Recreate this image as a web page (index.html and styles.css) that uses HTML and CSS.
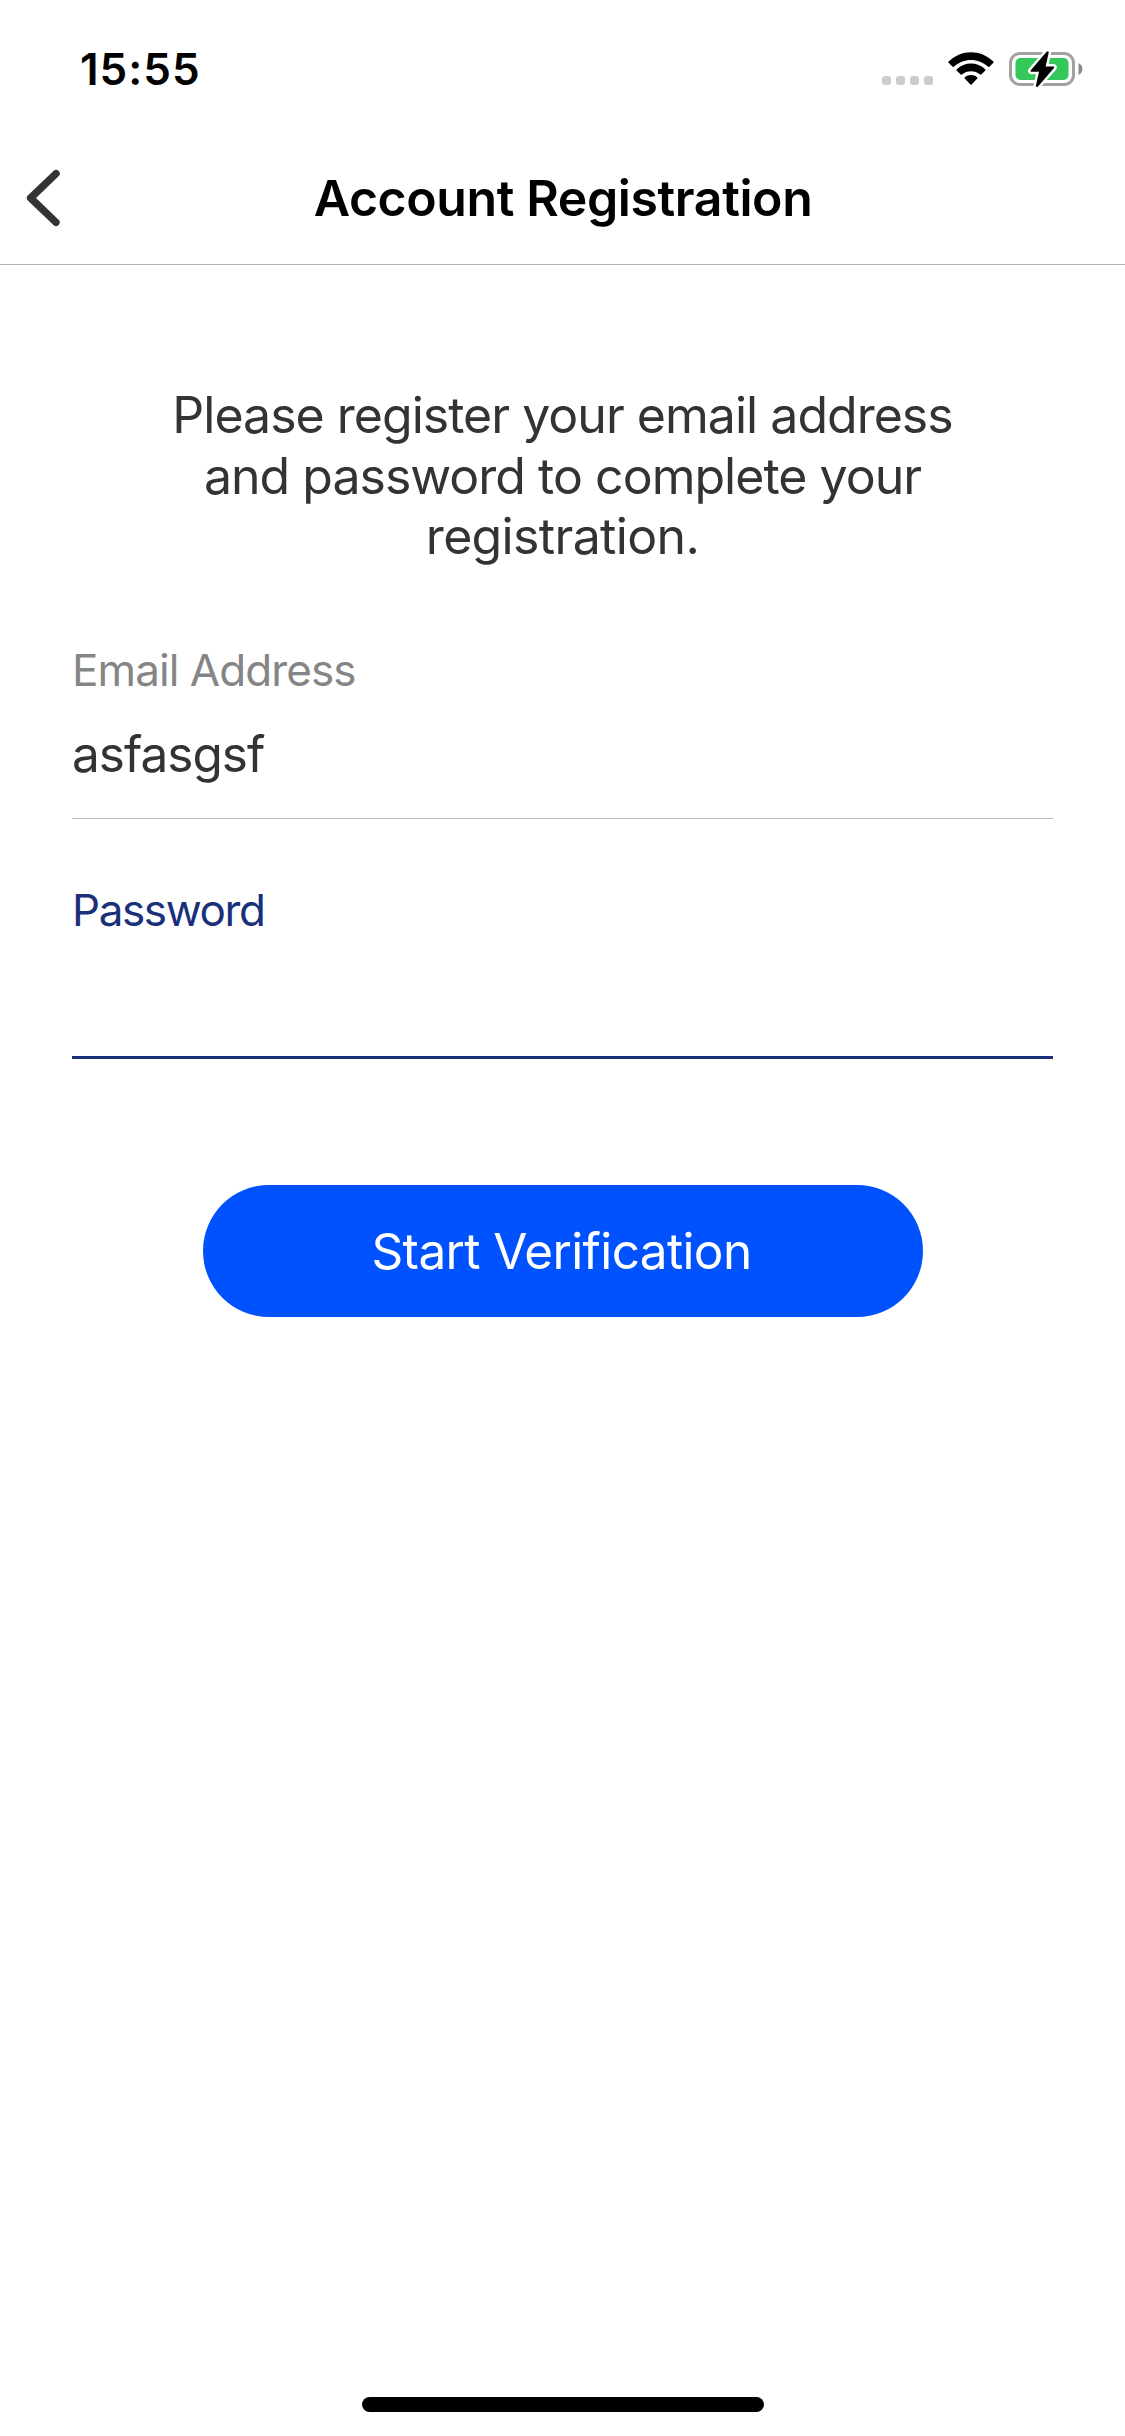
FILE: index.html
```html
<!DOCTYPE html>
<html lang="en">
<head>
<meta charset="utf-8">
<title>Account Registration</title>
<link rel="stylesheet" href="styles.css">
</head>
<body>
<div class="screen">
  <div class="status-bar">
    <span class="clock">15:55</span>
    <div class="indicators">
      <div class="signal"><i></i><i></i><i></i><i></i></div>
      <svg class="wifi" width="46" height="34" viewBox="0 0 46 34">
        <path d="M0.6 9.6C13.4-3 32.6-3 45.4 9.6Q46 10.2 45.4 10.8L41.4 14.8Q40.9 15.3 40.3 14.8C30.4 5.6 15.6 5.6 5.7 14.8Q5.1 15.3 4.6 14.8L0.6 10.8Q0 10.2 0.6 9.6Z"/>
        <path d="M8.6 17.4C16.8 9.6 29.2 9.6 37.4 17.4Q38 18 37.4 18.6L33.3 22.6Q32.8 23.1 32.2 22.6C27 18 19 18 13.8 22.6Q13.2 23.1 12.7 22.6L8.6 18.6Q8 18 8.6 17.4Z"/>
        <path d="M16.8 25.3C20.3 22.3 25.7 22.3 29.2 25.3Q29.9 25.9 29.3 26.5L23.6 32.4Q23 33 22.4 32.4L16.7 26.5Q16.1 25.9 16.8 25.3Z"/>
      </svg>
      <svg class="battery" width="74" height="38" viewBox="0 0 74 38">
        <rect x="1.5" y="3.5" width="63" height="31" rx="9.5" fill="none" stroke="#a1a1a1" stroke-width="3"/>
        <rect x="6.500" y="8" width="53" height="22" rx="5" fill="#34c759"/>
        <path d="M69.5 13.2C72 14 73.4 16.3 73.4 19S72 24 69.5 24.8Z" fill="#8a8a8a"/>
        <path d="M37.600 1.800L21.800 20.300C21.200 21 21.600 21.700 22.400 21.700H30L26.900 35.600C26.700 36.800 28.200 37.400 29 36.400L45 18C45.600 17.300 45.300 16.600 44.400 16.600H36.600L39.700 2.700C39.900 1.300 38.500 0.800 37.600 1.800Z" fill="#000" stroke="#fff" stroke-width="5" stroke-linejoin="round" paint-order="stroke"/>
      </svg>
    </div>
  </div>

  <header class="nav-bar">
    <svg class="back" width="34" height="58" viewBox="0 0 34 58">
      <path d="M30 4.600L4.600 29L30 53.400" fill="none" stroke="#333" stroke-width="7.400" stroke-linecap="round" stroke-linejoin="round"/>
    </svg>
    <h1 class="title">Account Registration</h1>
  </header>

  <main class="content">
    <p class="intro">
      <span class="intro-line">Please register your email address</span>
      <span class="intro-line">and password to complete your</span>
      <span class="intro-line intro-last">registration.</span>
    </p>
    <label class="field">
      <span class="field-label">Email Address</span>
      <input class="field-input" type="text" value="asfasgsf">
    </label>
    <label class="field field-active">
      <span class="field-label">Password</span>
      <input class="field-input" type="password">
    </label>
    <button class="submit" type="button">Start Verification</button>
  </main>

  <div class="home-indicator"></div>
</div>
</body>
</html>
```
FILE: styles.css
```css
* { box-sizing: border-box; }

body {
  margin: 0;
  background: #fff;
  color: #333;
  font-family: Inter, "Liberation Sans", sans-serif;
}

.screen {
  width: 1125px;
  height: 2436px;
  display: flex;
  flex-direction: column;
  background: #fff;
}

.status-bar {
  height: 132px;
  padding: 6px 42px 0 80px;
  display: flex;
  align-items: center;
  justify-content: space-between;
}

.clock {
  color: #000;
  font-size: 44px;
  font-weight: 600;
  line-height: 54px;
  letter-spacing: 1px;
}

.indicators { display: flex; align-items: center; }

.signal { display: flex; gap: 5px; margin: 23px 15px 0 0; }
.signal i { width: 9px; height: 9px; border-radius: 3px; background: #ccc; }

.wifi { margin-right: 15px; }

.nav-bar {
  height: 133px;
  padding: 0 25px 0 26px;
  display: grid;
  grid-template-columns: 34px 1fr 34px;
  align-items: center;
  border-bottom: 1px solid #b2b2b2;
}

.title {
  margin: 0;
  color: #000;
  font-size: 50px;
  font-weight: 600;
  line-height: 60px;
  letter-spacing: -0.4px;
  text-align: center;
}

.content {
  flex: 1;
  display: flex;
  flex-direction: column;
  padding: 120px 72px 0;
}

.intro {
  margin: 0 0 77px;
  font-size: 50px;
  line-height: 60.67px;
  letter-spacing: -0.98px;
  text-align: center;
}

.intro-line { display: block; }
.intro-last { letter-spacing: -0.66px; }

.field {
  height: 175px;
  margin-bottom: 65px;
  display: flex;
  flex-direction: column;
  border-bottom: 1px solid #bbb;
}

.field-label {
  color: #858585;
  font-size: 44px;
  line-height: 52px;
  letter-spacing: -0.92px;
}

.field-input {
  width: 100%;
  height: 62px;
  margin-top: 27px;
  padding: 0;
  border: 0;
  outline: 0;
  background: none;
  color: #333;
  font: 49.5px/62px Inter, "Liberation Sans", sans-serif;
  letter-spacing: -1px;
}

.field-active {
  margin-bottom: 126px;
  border-bottom: 3px solid #19307a;
}

.field-active .field-label { color: #19307a; letter-spacing: -1.4px; }

.submit {
  align-self: center;
  width: 720px;
  height: 132px;
  padding: 1px 2px 0 0;
  border: 0;
  border-radius: 66px;
  background: #0052ff;
  color: #fff;
  font: 49.5px/131px Inter, "Liberation Sans", sans-serif;
  letter-spacing: -0.63px;
}

.home-indicator {
  align-self: center;
  width: 402px;
  height: 15px;
  margin-bottom: 24px;
  border-radius: 8px;
  background: #000;
}
```
